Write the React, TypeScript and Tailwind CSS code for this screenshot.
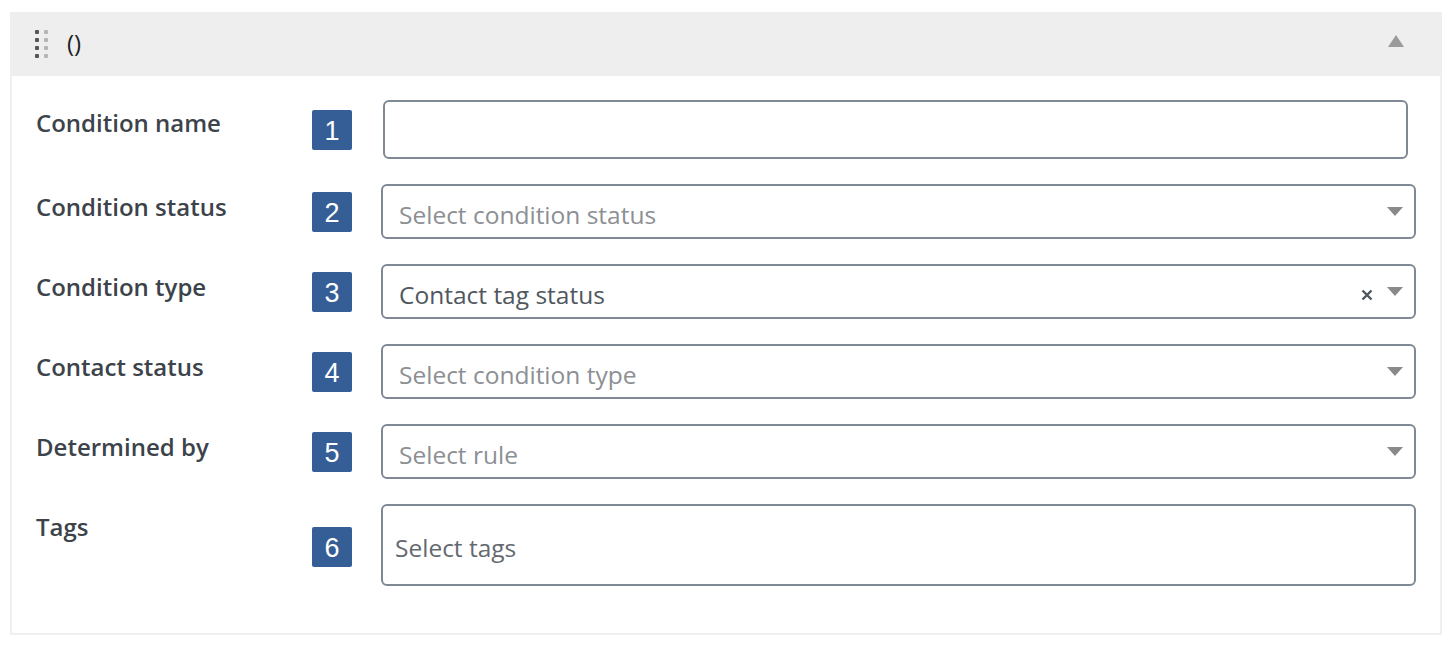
import React from 'react'

const rows = [
  { label: 'Condition name', kind: 'input' as const },
  { label: 'Condition status', kind: 'select' as const, placeholder: 'Select condition status' },
  { label: 'Condition type', kind: 'select' as const, value: 'Contact tag status', clearable: true },
  { label: 'Contact status', kind: 'select' as const, placeholder: 'Select condition type' },
  { label: 'Determined by', kind: 'select' as const, placeholder: 'Select rule' },
  { label: 'Tags', kind: 'tags' as const, placeholder: 'Select tags' },
]

function Caret({ up = false, className = '' }: { up?: boolean; className?: string }) {
  return (
    <svg width="16" height={up ? 12 : 9} viewBox={up ? '0 0 16 12' : '0 0 16 9'} className={className}>
      {up ? <polygon points="8,0 16,12 0,12" fill="currentColor" /> : <polygon points="0,0 16,0 8,9" fill="currentColor" />}
    </svg>
  )
}

function Grip() {
  return (
    <div className="grid grid-cols-2 gap-x-[5px] gap-y-[4px] w-[13px]">
      {[0, 1, 2, 3].map((i) => (
        <React.Fragment key={i}>
          <span className="w-[4px] h-[4px] bg-[#555] rounded-[1px]" />
          <span className="w-[4px] h-[4px] bg-[#b5b5b5] rounded-[1px]" />
        </React.Fragment>
      ))}
    </div>
  )
}

function Badge({ n, className = '' }: { n: number; className?: string }) {
  return (
    <div
      className={`w-[40px] h-[40px] shrink-0 bg-[#365e96] rounded-[2px] flex items-center justify-center pt-[3px] text-white text-[27px] font-['Liberation_Sans',Arial,sans-serif] leading-none ${className}`}
    >
      {n}
    </div>
  )
}

export default function App() {
  return (
    <div className="w-[1450px] h-[646px] bg-white pt-[12px] pl-[10px] font-['Open_Sans','Noto_Sans',sans-serif]">
      <div className="w-[1432px] border-2 border-t-0 border-[#f0f0f0]">
        <div className="h-[64px] -mx-[2px] bg-[#eeeeee] flex items-center pl-[25px] pr-[38px]">
          <Grip />
          <span className="ml-[19px] text-[24px] text-[#1d2327] leading-none pb-[2px]">()</span>
          <Caret up className="ml-auto text-[#9a9a9a] mt-[-6px]" />
        </div>

        <div className="pt-[24px] pb-[47px] pl-[24px] pr-[24px] flex flex-col gap-[25px]">
          {rows.map((r, i) => (
            <div key={i} className="flex items-start">
              <div className="w-[276px] shrink-0 pt-[7px] text-[24px] font-semibold text-[#3c434a] leading-[32px]">
                {r.label}
              </div>
              <div
                className={
                  r.kind === 'input'
                    ? 'flex-1 flex items-center h-[59px] mr-[8px]'
                    : r.kind === 'tags'
                      ? 'flex-1 flex items-center h-[82px]'
                      : 'flex-1 flex items-center h-[55px]'
                }
              >
                <Badge n={i + 1} className={r.kind === 'tags' ? 'mt-[4px]' : ''} />
                {r.kind === 'input' && (
                  <div className="ml-[31px] flex-1 h-[59px] border-2 border-[#7f8996] rounded-[6px] bg-white" />
                )}
                {r.kind === 'select' && (
                  <div className="ml-[29px] flex-1 h-[55px] border-2 border-[#7f8996] rounded-[6px] bg-white flex items-center pl-[16px] pr-[11px]">
                    <span
                      className={
                        r.value
                          ? 'text-[24.5px] text-[#50575e] leading-none pt-[8px]'
                          : 'text-[24.5px] text-[#8c8f94] leading-none pt-[8px]'
                      }
                    >
                      {r.value ?? r.placeholder}
                    </span>
                    {r.clearable && (
                      <span className="ml-auto mr-[14px] mt-[6px] text-[#50575e]">
                        <svg width="12" height="12" viewBox="0 0 12 12">
                          <path d="M1.5 1.5 L10.5 10.5 M10.5 1.5 L1.5 10.5" stroke="currentColor" strokeWidth="2.4" />
                        </svg>
                      </span>
                    )}
                    <Caret className={r.clearable ? 'text-[#8a8a8a]' : 'ml-auto text-[#8a8a8a]'} />
                  </div>
                )}
                {r.kind === 'tags' && (
                  <div className="ml-[29px] flex-1 h-[82px] border-2 border-[#7f8996] rounded-[6px] bg-white flex items-center pl-[12px]">
                    <span className="text-[24.5px] text-[#646970] leading-none pt-[6px]">{r.placeholder}</span>
                  </div>
                )}
              </div>
            </div>
          ))}
        </div>
      </div>
    </div>
  )
}
